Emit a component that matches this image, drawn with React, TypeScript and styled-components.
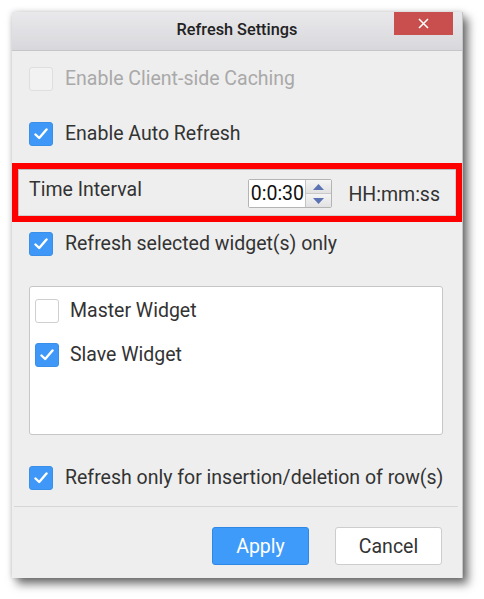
import React from "react";
import styled, { createGlobalStyle } from "styled-components";

const Global = createGlobalStyle`
  html, body { margin: 0; padding: 0; background: #ffffff; }
  body { font-family: Roboto, "Noto Sans", "Liberation Sans", sans-serif; }
  * { box-sizing: border-box; }
`;

const Page = styled.div`
  padding: 12px 0 0 12px;
  width: 484px;
  height: 599px;
`;

const Dialog = styled.div`
  position: relative;
  width: 451px;
  height: 566px;
  background: #eeeeee;
  border-right: 1px solid #c4c4c4;
  box-shadow: 0 0 6px rgba(0, 0, 0, 0.18), 5px 6px 9px rgba(0, 0, 0, 0.55);
  display: flex;
  flex-direction: column;
`;

const TitleBar = styled.div`
  height: 39px;
  flex: none;
  background: linear-gradient(#e9e8eb, #d8d7db);
  border-bottom: 1px solid #c6c6c6;
  display: flex;
  align-items: center;
  justify-content: center;
  padding-bottom: 4px;
  font-size: 16.3px;
  color: #222;
  font-weight: 500;
`;

const CloseButton = styled.div`
  position: absolute;
  top: 0;
  right: 9px;
  width: 59px;
  height: 23px;
  background: #c94f4f;
  display: flex;
  align-items: center;
  justify-content: center;
`;

const Content = styled.div`
  display: flex;
  flex-direction: column;
  padding: 15px 0 0 17px;
`;

const CheckRow = styled.label<{ $mt?: number }>`
  display: flex;
  align-items: center;
  gap: 12px;
  height: 25px;
  margin-top: ${(p) => p.$mt ?? 0}px;
  font-size: 19.5px;
  color: #333;
  white-space: nowrap;
`;

const RowText = styled.span<{ $disabled?: boolean }>`
  color: ${(p) => (p.$disabled ? "#a9a9a9" : "#333")};
  line-height: 25px;
`;

const Box = styled.span<{ $checked?: boolean; $disabled?: boolean }>`
  width: 24px;
  height: 24px;
  flex: none;
  border-radius: 3px;
  display: flex;
  align-items: center;
  justify-content: center;
  background: ${(p) => (p.$checked ? "#3f98f8" : p.$disabled ? "#f2f2f2" : "#ffffff")};
  border: 1px solid ${(p) => (p.$checked ? "#3a8fe8" : p.$disabled ? "#dedede" : "#cfcfcf")};
`;

const Highlight = styled.div`
  margin: 17px 0 0 -17px;
  width: 450px;
  height: 59px;
  border: 6px solid #ff0000;
  box-shadow: inset 1px 1px 0 #bdbdbd, inset -1px -1px 0 #d0d0d0;
  display: flex;
  align-items: center;
  padding: 0 16px 0 11px;
  font-size: 19.5px;
  color: #333;
  white-space: nowrap;
`;

const IntervalLabel = styled.span`
  flex: 1;
  padding-bottom: 7px;
`;

const Spinner = styled.div`
  display: flex;
  height: 29px;
  margin-top: 2px;
  border: 1px solid #b4b4b4;
  border-radius: 2px;
  background: #fff;
`;

const SpinInput = styled.div`
  width: 56px;
  display: flex;
  align-items: center;
  justify-content: center;
  font-size: 19.5px;
  color: #111;
  background: #fff;
`;

const SpinButtons = styled.div`
  width: 26px;
  display: flex;
  flex-direction: column;
  border-left: 1px solid #c4c4c4;
`;

const SpinHalf = styled.div<{ $down?: boolean }>`
  flex: 1;
  display: flex;
  align-items: center;
  justify-content: center;
  background: linear-gradient(#f4f4f4, #e2e2e2);
  border-top: ${(p) => (p.$down ? "1px solid #c8c8c8" : "none")};
`;

const Format = styled.span`
  margin-left: 16px;
  margin-top: 4px;
`;

const ListBox = styled.div`
  margin-top: 30px;
  width: 414px;
  height: 149px;
  background: #ffffff;
  border: 1px solid #c6c6c6;
  border-radius: 3px;
  display: flex;
  flex-direction: column;
  gap: 19px;
  padding: 11px 0 0 5px;
`;

const ListRow = styled.label`
  display: flex;
  align-items: center;
  gap: 11px;
  height: 25px;
  font-size: 19.5px;
  color: #333;
`;

const Separator = styled.div`
  margin: 16px 0 0 -15px;
  width: 444px;
  height: 1px;
  background: #d6d6d6;
`;

const Footer = styled.div`
  display: flex;
  justify-content: flex-end;
  gap: 26px;
  padding: 20px 20px 0 0;
`;

const Button = styled.button<{ $primary?: boolean }>`
  height: 38px;
  width: ${(p) => (p.$primary ? 97 : 107)}px;
  border-radius: 3px;
  font-family: Roboto, "Noto Sans", sans-serif;
  font-size: 19.5px;
  border: 1px solid ${(p) => (p.$primary ? "#2f88e6" : "#cdcdcd")};
  background: ${(p) => (p.$primary ? "#3f9bfa" : "#ffffff")};
  color: ${(p) => (p.$primary ? "#ffffff" : "#333")};
  padding: 0;
`;

const Check = () => (
  <svg width="14" height="12" viewBox="0 0 14 12">
    <path d="M1.5 6.5 L5.2 10 L12.5 1.5" fill="none" stroke="#fff" strokeWidth="2.4" strokeLinecap="round" strokeLinejoin="round" />
  </svg>
);

const CheckBox = ({ checked, disabled }: { checked?: boolean; disabled?: boolean }) => (
  <Box $checked={checked} $disabled={disabled}>{checked && <Check />}</Box>
);

export default function App() {
  return (
    <>
      <Global />
      <Page>
        <Dialog>
          <TitleBar>Refresh Settings</TitleBar>
          <CloseButton>
            <svg width="11" height="11" viewBox="0 0 11 11">
              <path d="M1 1 L10 10 M10 1 L1 10" stroke="#fff" strokeWidth="1.5" />
            </svg>
          </CloseButton>
          <Content>
            <CheckRow>
              <CheckBox disabled />
              <RowText $disabled>Enable Client-side Caching</RowText>
            </CheckRow>
            <CheckRow $mt={30}>
              <CheckBox checked />
              <RowText>Enable Auto Refresh</RowText>
            </CheckRow>
            <Highlight>
              <IntervalLabel>Time Interval</IntervalLabel>
              <Spinner>
                <SpinInput>0:0:30</SpinInput>
                <SpinButtons>
                  <SpinHalf>
                    <svg width="11" height="6" viewBox="0 0 11 6"><path d="M0 6 L5.5 0 L11 6 Z" fill="#5b73b3" /></svg>
                  </SpinHalf>
                  <SpinHalf $down>
                    <svg width="11" height="6" viewBox="0 0 11 6"><path d="M0 0 L5.5 6 L11 0 Z" fill="#5b73b3" /></svg>
                  </SpinHalf>
                </SpinButtons>
              </Spinner>
              <Format>HH:mm:ss</Format>
            </Highlight>
            <CheckRow $mt={9}>
              <CheckBox checked />
              <RowText>Refresh selected widget(s) only</RowText>
            </CheckRow>
            <ListBox>
              <ListRow>
                <CheckBox />
                <span>Master Widget</span>
              </ListRow>
              <ListRow>
                <CheckBox checked />
                <span>Slave Widget</span>
              </ListRow>
            </ListBox>
            <CheckRow $mt={30}>
              <CheckBox checked />
              <RowText>Refresh only for insertion/deletion of row(s)</RowText>
            </CheckRow>
            <Separator />
          </Content>
          <Footer>
            <Button $primary>Apply</Button>
            <Button>Cancel</Button>
          </Footer>
        </Dialog>
      </Page>
    </>
  );
}
